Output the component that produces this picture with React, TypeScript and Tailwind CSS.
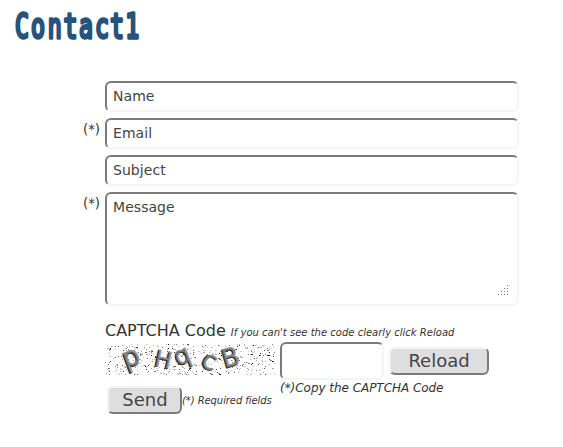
import type { ReactNode } from "react";

const inset =
  "block rounded-[6px] border-2 border-t-[#7b7b7b] border-l-[#7b7b7b] border-r-[#f5f5f5] border-b-[#f5f5f5] bg-white outline-none placeholder:text-[#444] placeholder:opacity-100";
const outset =
  "flex items-center justify-center rounded-[6px] border-2 border-t-[#f3f3f3] border-l-[#f3f3f3] border-r-[#7b7b7b] border-b-[#7b7b7b] bg-[#dedede] pb-[2px] text-[18px] text-[#444]";
const line = `${inset} h-[31px] w-[414px] px-[6px] pb-[2px] text-[14px] tracking-[0.05px]`;

function makeSpecks(count: number) {
  let seed = 7351;
  const next = () => {
    seed = (seed * 1103515245 + 12345) % 2147483648;
    return seed / 2147483648;
  };
  return Array.from({ length: count }, () => ({
    x: Math.floor(next() * 170),
    y: Math.floor(next() * 31),
    o: 0.15 + next() * next() * 0.85,
    w: next() > 0.85 ? 2 : 1,
  }));
}
const specks = makeSpecks(560);

const glyphs = [
  { c: "p", x: 27, y: 17, r: -20, s: 29, mid: 0.17 },
  { c: "H", x: 58, y: 15, r: 12, s: 24, mid: 0.35 },
  { c: "q", x: 78, y: 15, r: -22, s: 27, mid: 0.18 },
  { c: "c", x: 104, y: 18, r: 22, s: 28, mid: 0.27 },
  { c: "B", x: 125, y: 13, r: -16, s: 27, mid: 0.35 },
];

function Captcha() {
  return (
    <svg width="170" height="31" viewBox="0 0 170 31" className="block shrink-0 overflow-visible">
      {specks.map((p, i) => (
        <rect key={i} x={p.x} y={p.y} width={p.w} height="1" fill="#000" opacity={p.o} shapeRendering="crispEdges" />
      ))}
      {glyphs.map((g) => (
        <g key={g.c} transform={`translate(${g.x} ${g.y}) rotate(${g.r})`} fontFamily="DejaVu Sans, sans-serif" fontSize={g.s * 0.94} textAnchor="middle">
          <text y={g.s * g.mid} fill="#888" stroke="#777" strokeWidth="1">{g.c}</text>
          <text x="-0.7" y={g.s * g.mid + 0.6} fill="#333">{g.c}</text>
          <text x="0.7" y={g.s * g.mid - 0.3} fill="#aaa" opacity="0.6">{g.c}</text>
        </g>
      ))}
    </svg>
  );
}

function Field({ required, children }: { required?: boolean; children: ReactNode }) {
  return (
    <div className="flex">
      <span className="w-[105px] shrink-0 pt-[3px] pr-[5px] text-right text-[13.3px] leading-[18px]">{required ? "(*)" : ""}</span>
      {children}
    </div>
  );
}

export default function App() {
  return (
    <main className="h-[447px] w-[563px] overflow-hidden bg-white font-['DejaVu_Sans',sans-serif] text-[#333]">
      <h1 className="h-[81px] pl-[14px]">
        <svg width="140" height="50" viewBox="0 0 140 50" className="block">
          <text
            transform="translate(0.8 0) scale(0.68 1)"
            x="0.2 24 48.5 71.5 94.5 118 140 162.5"
            y="37.9"
            className="font-['DejaVu_Sans_Mono',monospace] text-[34.2px] font-normal"
            fill="#27527b"
            stroke="#27527b"
            strokeWidth="3.3"
            strokeLinejoin="round"
          >
            Contact1
          </text>
        </svg>
      </h1>
      <form className="flex flex-col gap-[6px]">
        <Field><input className={line} placeholder="Name" /></Field>
        <Field required><input className={line} placeholder="Email" /></Field>
        <Field><input className={line} placeholder="Subject" /></Field>
        <Field required>
          <div className={`${inset} flex h-[114px] w-[414px] items-end justify-between pr-[8px] pb-[8px] pl-[6px] text-[14px] tracking-[0.05px] text-[#444]`}>
            <span className="self-start pt-[5px] leading-[17px]">Message</span>
            <svg width="11" height="11" viewBox="0 0 11 11" fill="#777" shapeRendering="crispEdges">
              {[[9, 0], [6, 3], [9, 3], [3, 6], [6, 6], [9, 6], [0, 9], [3, 9], [6, 9], [9, 9]].map(([x, y]) => (
                <rect key={`${x}-${y}`} x={x} y={y} width="1" height="1" />
              ))}
            </svg>
          </div>
        </Field>
      </form>
      <section className="pt-[15px] pl-[105px]">
        <div className="flex h-[21px] items-baseline gap-[5px] whitespace-nowrap">
          <span className="text-[16px] leading-[20px]">CAPTCHA Code</span>
          <em className="text-[10px] tracking-[0.01px]">If you can't see the code clearly click Reload</em>
        </div>
        <div className="flex">
          <div className="w-[175px] pt-[2px]">
            <Captcha />
            <div className="mt-[11px] ml-[2px] flex items-center whitespace-nowrap">
              <button className={`${outset} h-[28px] w-[75px] shrink-0 pl-[1px]`}>Send</button>
              <em className="text-[10px] tracking-[-0.08px]">(*) Required fields</em>
            </div>
          </div>
          <div>
            <div className="flex gap-[5px]">
              <input className={`${inset} h-[38px] w-[104px]`} />
              <button className={`${outset} mt-[5px] h-[28px] w-[100px]`}>Reload</button>
            </div>
            <em className="block text-[12px] leading-[16px] tracking-[-0.04px]">(*)Copy the CAPTCHA Code</em>
          </div>
        </div>
      </section>
    </main>
  );
}
